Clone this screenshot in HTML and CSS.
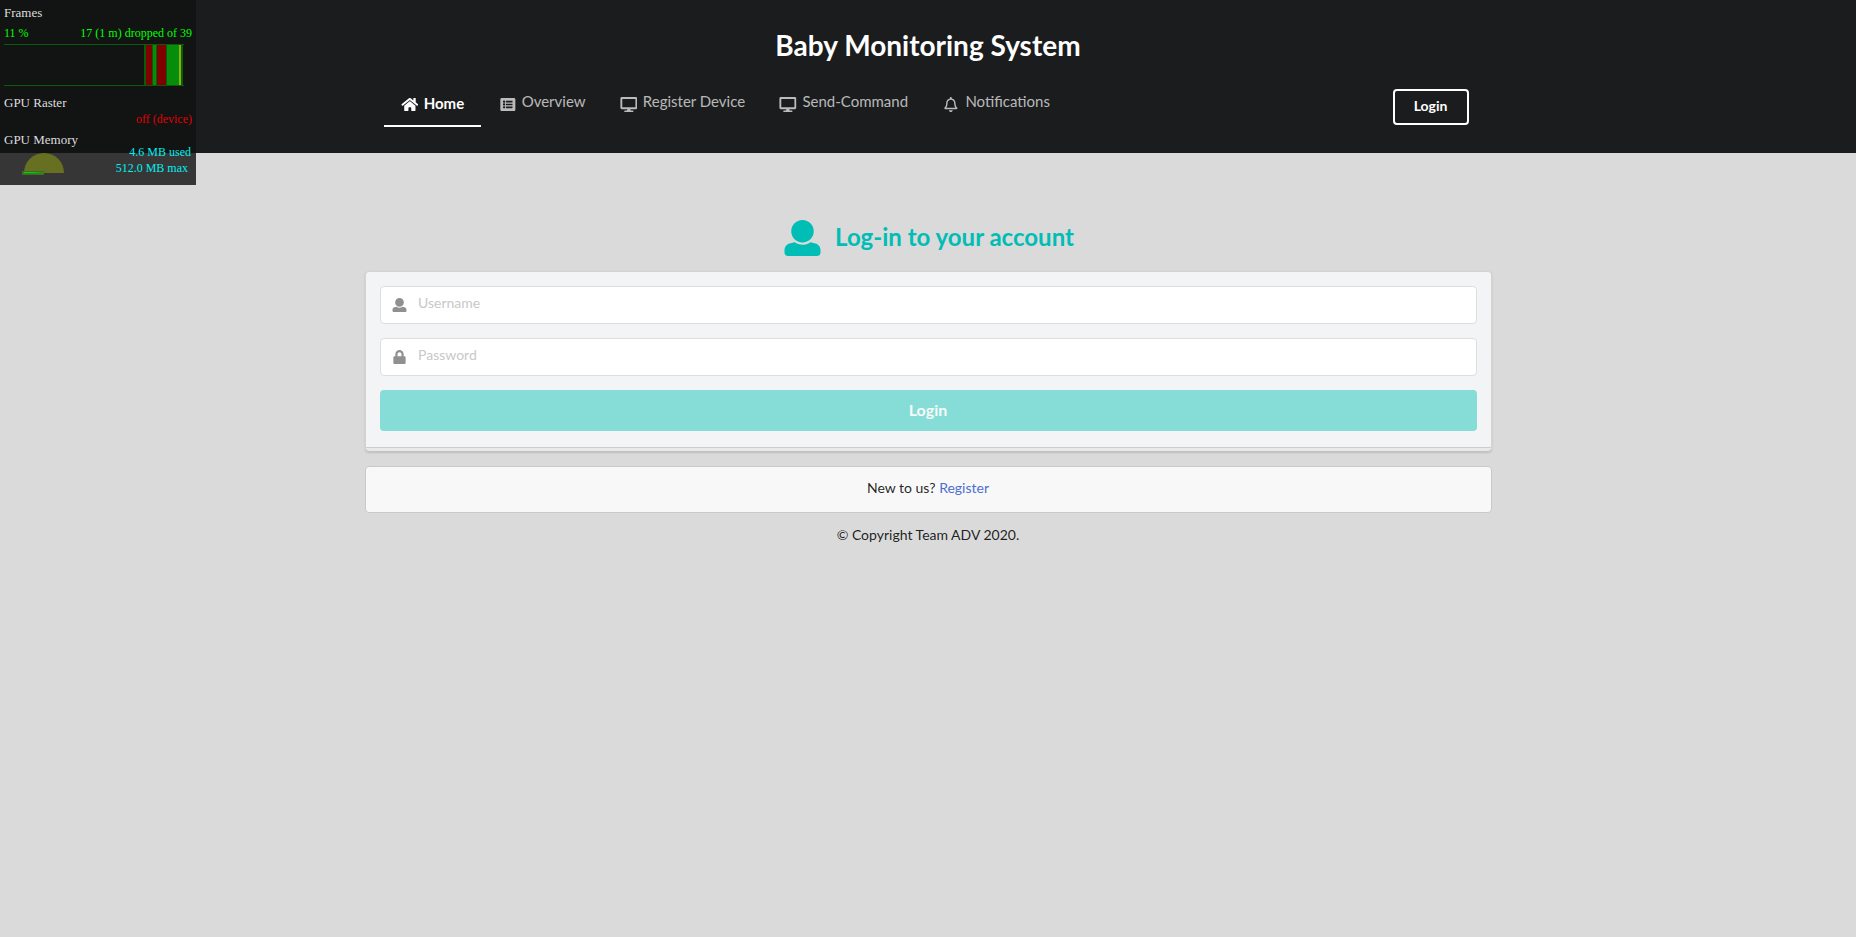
FILE: index.html
```html
<!DOCTYPE html>
<html lang="en">
<head>
<meta charset="utf-8">
<title>Baby Monitoring System</title>
<link rel="stylesheet" href="styles.css">
</head>
<body>
<svg class="defs" width="0" height="0">
  <symbol id="user" viewBox="0 0 512 512"><path d="M256 0c88.366 0 160 71.634 160 160s-71.634 160-160 160S96 248.366 96 160 167.634 0 256 0zm183.283 333.821l-71.313-17.828c-74.923 53.89-165.738 41.864-223.94 0l-71.313 17.828C29.981 344.505 0 382.903 0 426.955V464c0 26.51 21.49 48 48 48h416c26.51 0 48-21.49 48-48v-37.045c0-44.052-29.981-82.45-72.717-93.134z"/></symbol>
  <symbol id="desktop" viewBox="0 0 576 512"><path d="M528 0H48C21.500 0 0 21.500 0 48v320c0 26.500 21.500 48 48 48h192l-16 48h-72c-13.300 0-24 10.700-24 24s10.700 24 24 24h272c13.300 0 24-10.700 24-24s-10.700-24-24-24h-72l-16-48h192c26.500 0 48-21.500 48-48V48c0-26.500-21.500-48-48-48zm-16 352H64V64h448v288z"/></symbol>
</svg>
<header class="masthead">
  <div class="container">
    <h1 class="title">Baby Monitoring System</h1>
    <nav class="menu">
      <a class="item active"><svg class="icon" viewBox="0 0 576 512"><path d="M280.370 148.260L96 300.110V464a16 16 0 0 0 16 16l112.060-.290a16 16 0 0 0 15.920-16V368a16 16 0 0 1 16-16h64a16 16 0 0 1 16 16v95.640a16 16 0 0 0 16 16.050L464 480a16 16 0 0 0 16-16V300L295.670 148.260a12.190 12.190 0 0 0-15.300 0zM571.600 251.470L488 182.560V44.050a12 12 0 0 0-12-12h-56a12 12 0 0 0-12 12v72.610L318.470 43a48 48 0 0 0-61 0L4.340 251.470a12 12 0 0 0-1.600 16.900l25.500 31A12 12 0 0 0 45.150 301l235.220-193.740a12.190 12.190 0 0 1 15.300 0L530.900 301a12 12 0 0 0 16.900-1.600l25.500-31a12 12 0 0 0-1.700-16.930z"/></svg>Home</a>
      <a class="item"><svg class="icon" viewBox="0 0 512 512"><path d="M464 480H48c-26.510 0-48-21.490-48-48V80c0-26.510 21.490-48 48-48h416c26.510 0 48 21.490 48 48v352c0 26.510-21.490 48-48 48zM128 120c-22.091 0-40 17.909-40 40s17.909 40 40 40 40-17.909 40-40-17.909-40-40-40zm0 96c-22.091 0-40 17.909-40 40s17.909 40 40 40 40-17.909 40-40-17.909-40-40-40zm0 96c-22.091 0-40 17.909-40 40s17.909 40 40 40 40-17.909 40-40-17.909-40-40-40zm288-136v-32c0-6.627-5.373-12-12-12H204c-6.627 0-12 5.373-12 12v32c0 6.627 5.373 12 12 12h200c6.627 0 12-5.373 12-12zm0 96v-32c0-6.627-5.373-12-12-12H204c-6.627 0-12 5.373-12 12v32c0 6.627 5.373 12 12 12h200c6.627 0 12-5.373 12-12zm0 96v-32c0-6.627-5.373-12-12-12H204c-6.627 0-12 5.373-12 12v32c0 6.627 5.373 12 12 12h200c6.627 0 12-5.373 12-12z"/></svg>Overview</a>
      <a class="item"><svg class="icon"><use href="#desktop"/></svg>Register Device</a>
      <a class="item"><svg class="icon"><use href="#desktop"/></svg>Send-Command</a>
      <a class="item"><svg class="icon" viewBox="0 0 448 512"><path d="M439.390 362.290c-19.320-20.760-55.470-51.990-55.470-154.290 0-77.700-54.480-139.900-127.940-155.160V32c0-17.670-14.320-32-31.980-32s-31.980 14.330-31.980 32v20.840C118.560 68.100 64.080 130.300 64.080 208c0 102.300-36.150 133.530-55.470 154.290-6 6.450-8.660 14.160-8.610 21.710.110 16.400 12.980 32 32.100 32h383.800c19.120 0 32-15.600 32.100-32 .050-7.550-2.610-15.270-8.610-21.710zM67.530 368c21.220-27.970 44.420-74.330 44.530-159.420 0-.200-.060-.380-.060-.580 0-61.860 50.140-112 112-112s112 50.140 112 112c0 .200-.060.380-.060.580.110 85.100 23.310 131.460 44.530 159.420H67.530zM224 512c35.320 0 63.970-28.650 63.970-64H160.030c0 35.350 28.650 64 63.970 64z"/></svg>Notifications</a>
      <a class="login-link">Login</a>
    </nav>
  </div>
</header>
<main class="container">
  <h2 class="heading"><svg class="heading-icon"><use href="#user"/></svg><span>Log-in to your account</span></h2>
  <form class="card">
    <label class="field"><svg class="field-icon"><use href="#user"/></svg><input class="input" type="text" placeholder="Username"></label>
    <label class="field"><svg class="field-icon" viewBox="0 0 448 512"><path d="M400 224h-24v-72C376 68.200 307.800 0 224 0S72 68.200 72 152v72H48c-26.500 0-48 21.500-48 48v192c0 26.500 21.500 48 48 48h352c26.500 0 48-21.500 48-48V272c0-26.500-21.500-48-48-48zm-104 0H152v-72c0-39.700 32.300-72 72-72s72 32.300 72 72v72z"/></svg><input class="input" type="password" placeholder="Password"></label>
    <button class="submit" type="button">Login</button>
    <div class="stack"></div>
  </form>
  <div class="message"><span>New to us? <a class="register">Register</a></span></div>
  <footer class="copyright">© Copyright Team ADV 2020.</footer>
</main>
<aside class="stats">
  <div class="stat-title">Frames</div>
  <div class="frames-row"><span>11 %</span><span>17 (1 m) dropped of 39</span></div>
  <svg class="graph" width="180" height="42" shape-rendering="crispEdges">
    <path fill="#095b0d" d="M0 0h180v1H0zM0 41h180v1H0zM140 0h39v42h-39z"/>
    <path fill="#800000" d="M142 1h6v40h-6zM153 1h9v40h-9z"/>
    <path fill="#078c0c" d="M149 1h3v40h-3zM163 1h12v40h-12z"/>
    <path fill="#84b507" d="M175 1h2v40h-2z"/>
  </svg>
  <div class="stat-title raster">GPU Raster</div>
  <div class="raster-value">off (device)</div>
  <div class="stat-title memory">GPU Memory</div>
  <div class="memory-row">
    <svg class="gauge" width="42" height="22"><path fill="#667020" d="M2 20a20 20 0 0 1 40 0z"/><path fill="#3f6a25" d="M0 18h22v4H0z"/><path fill="#05ce0a" d="M2 19h8l12 .8v.5H2z"/></svg>
    <div class="memory-values"><div>4.6 MB used</div><div class="max">512.0 MB max</div></div>
  </div>
</aside>
</body>
</html>
```
FILE: styles.css
```css
* { box-sizing: border-box; }
body { margin: 0; min-height: 937px; background: #dadada; font: 14px/20px Lato, sans-serif; color: rgba(0,0,0,.87); }
svg { fill: currentColor; }
.defs { position: absolute; }
.container { width: 1127px; margin: 0 auto; }
.masthead { height: 153px; background: #1b1c1d; color: #fff; padding-top: 27px; }
.title { margin: 0; font-size: 28px; line-height: 36px; font-weight: 700; text-align: center; }
.menu { display: flex; align-items: flex-start; margin-top: 26px; padding: 0 23px 0 19px; height: 40px; font-size: 15px; line-height: 15px; }
.item { display: flex; align-items: flex-start; padding: 5px 17.14px 0; color: rgba(255,255,255,.7); height: 38px; }
.item.active { padding-top: 7px; margin-right: .2px; color: #fff; font-weight: 700; border-bottom: 2px solid #fff; }
.icon { width: 17.7px; height: 15px; margin: 3px 5.36px 0 0; }
.active .icon { margin-top: 1px; }
.login-link { width: 76px; height: 36px; margin-left: auto; border: 2px solid #fff; border-radius: 4px; font-size: 14px; line-height: 30px; font-weight: 700; text-align: center; }
.heading { display: flex; justify-content: center; align-items: flex-start; gap: 14px; margin: 67px 0 14px; padding-left: 2px; height: 37px; font-size: 24px; line-height: 34px; font-weight: 700; color: #00bdb5; }
.heading-icon { width: 37px; height: 36px; }
.card { position: relative; height: 181px; padding: 14px; background: #f3f4f6; border: 1px solid #d2d3d4; border-radius: 4px; box-shadow: 0 1px 2px rgba(34,36,38,.15); display: flex; flex-direction: column; gap: 14px; }
.field { display: flex; align-items: center; flex: none; height: 38px; padding-left: 11px; border: 1px solid #dededf; border-radius: 4px; background: #fff; }
.field-icon { width: 15px; height: 14px; color: #909090; }
.input { flex: 1; border: 0; outline: 0; padding: 0 0 5px; margin-left: 11.500px; background: none; font: 14px/17px Lato, sans-serif; }
.input::placeholder { color: #c8c8c8; opacity: 1; }
.submit { flex: none; height: 41px; padding: 0 0 2px; border: 0; border-radius: 4px; background: #86dcd6; color: #f4fbfa; font: 700 16px/20px Lato, sans-serif; }
.stack { position: absolute; left: 0; right: 0; bottom: -1px; height: 5px; background: #e9e9ea; border-top: 1px solid #cccdce; border-bottom: 1px solid #c0c1c2; border-radius: 0 0 4px 4px; }
.message { display: flex; align-items: center; justify-content: center; height: 47px; margin-top: 14px; padding-bottom: 3px; background: #f8f8f8; border: 1px solid #c8c9c9; border-radius: 4px; }
.register { color: #4c6fd1; }
.copyright { margin-top: 12px; text-align: center; }
.stats { position: absolute; left: 0; top: 0; width: 196px; height: 185px; padding: 5px 4px; background: rgba(17,17,17,.82); font: 12px/14px "Liberation Serif", serif; }
.stat-title { font-size: 13px; line-height: 16px; color: #dedede; }
.frames-row { display: flex; justify-content: space-between; margin-top: 5px; color: #00ff00; }
.graph { display: block; margin-top: 4px; }
.raster { margin-top: 9px; }
.raster-value { margin-top: 1px; text-align: right; color: #e00000; }
.memory { margin-top: 6px; }
.memory-row { display: flex; justify-content: space-between; margin-top: -4px; color: #00f0f0; }
.gauge { margin: 9px 0 0 18px; }
.memory-values { line-height: 16px; text-align: right; padding-right: 1px; }
.max { padding-right: 3px; }
```
